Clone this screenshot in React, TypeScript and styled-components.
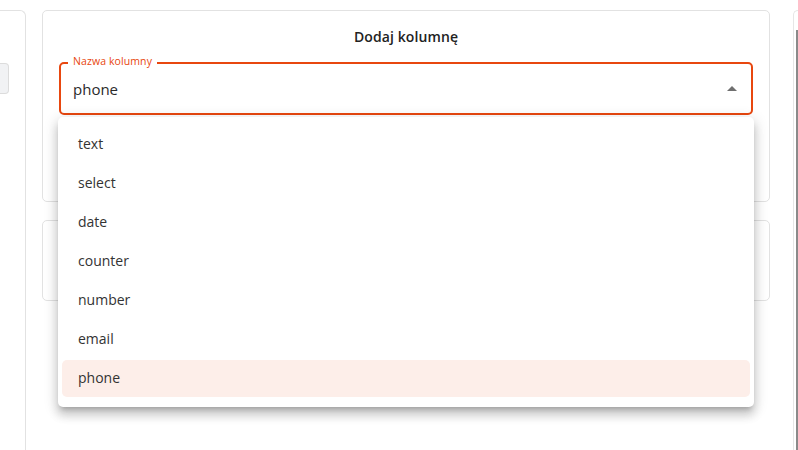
import React from "react";
import styled, { createGlobalStyle } from "styled-components";

const GlobalStyle = createGlobalStyle`
  html, body {
    margin: 0;
    padding: 0;
    background: #ffffff;
    font-family: "Open Sans", "Noto Sans", sans-serif;
    color: #333333;
    overflow: hidden;
  }
  * { box-sizing: border-box; }
`;

const Page = styled.div`
  display: flex;
  align-items: stretch;
  width: 798px;
  height: 450px;
  overflow: hidden;
`;

const LeftPanel = styled.div`
  width: 26px;
  flex: none;
  margin-top: 10px;
  border-top: 1px solid #e2e2e2;
  border-right: 1px solid #e2e2e2;
  border-top-right-radius: 6px;
  padding-top: 52px;
`;

const EdgeButton = styled.div`
  width: 9px;
  height: 31px;
  background: #f1f2f4;
  border: 1px solid #dcdcdc;
  border-left: none;
  border-radius: 0 4px 4px 0;
`;

const Main = styled.div`
  width: 728px;
  flex: none;
  margin-left: 16px;
  padding-top: 10px;
  display: flex;
  flex-direction: column;
  gap: 18px;
`;

const Card = styled.div<{ $h: number }>`
  position: relative;
  height: ${(p) => p.$h}px;
  border: 1px solid #e2e2e2;
  border-radius: 5px;
  background: #fff;
  padding: 0 16px;
`;

const Title = styled.div`
  text-align: center;
  font-size: 14px;
  font-weight: 600;
  color: #222;
  padding-top: 16px;
  height: 47px;
  letter-spacing: 0.1px;
`;

const FieldWrap = styled.div`
  position: relative;
`;

const Field = styled.fieldset`
  margin: 0;
  height: 57px;
  border: 2px solid #e8470f;
  border-radius: 5px;
  padding: 0 12px 0 12px;
  display: flex;
  align-items: center;
  justify-content: space-between;
  min-width: 0;
`;

const Legend = styled.legend`
  font-size: 10.5px;
  color: #e8470f;
  padding: 0 5px;
  margin-left: -5px;
  line-height: 1;
  letter-spacing: 0.1px;
  transform: translateY(-2px);
`;

const Value = styled.span`
  font-size: 15px;
  color: #2a2a2a;
  margin-top: -3px;
`;

const Arrow = styled.span`
  width: 0;
  height: 0;
  border-left: 5px solid transparent;
  border-right: 5px solid transparent;
  border-bottom: 5px solid #6f6f6f;
  margin-right: 2px;
  margin-top: -4px;
`;

const Menu = styled.ul`
  position: absolute;
  left: -1px;
  right: -1px;
  top: 59px;
  margin: 0;
  padding: 9px 4px 10px;
  list-style: none;
  background: #fff;
  border-radius: 5px;
  box-shadow: 0px 5px 5px -3px rgba(0, 0, 0, 0.2),
    0px 8px 10px 1px rgba(0, 0, 0, 0.14), 0px 3px 14px 2px rgba(0, 0, 0, 0.12);
  display: flex;
  flex-direction: column;
  gap: 2px;
  z-index: 10;
`;

const Item = styled.li<{ $active?: boolean }>`
  height: 37px;
  display: flex;
  align-items: center;
  padding: 0 0 2px 16px;
  font-size: 14px;
  color: #333;
  border-radius: 5px;
  background: ${(p) => (p.$active ? "#fdeee9" : "transparent")};
`;

const RightPanel = styled.div`
  flex: none;
  width: 6px;
  margin-left: 23px;
  margin-top: 10px;
  border-top: 1px solid #e6e6e6;
  border-left: 1px solid #e6e6e6;
  border-top-left-radius: 5px;
  display: flex;
  justify-content: flex-end;
  padding-top: 19px;
`;

const ScrollLine = styled.div`
  width: 2px;
  background: #8a8a8a;
  margin-right: 1px;
`;

const options = ["text", "select", "date", "counter", "number", "email", "phone"];

export default function App() {
  return (
    <>
      <GlobalStyle />
      <Page>
        <LeftPanel>
          <EdgeButton />
        </LeftPanel>
        <Main>
          <Card $h={192}>
            <Title>Dodaj kolumnę</Title>
            <FieldWrap>
              <Field>
                <Legend>Nazwa kolumny</Legend>
                <Value>phone</Value>
                <Arrow />
              </Field>
              <Menu>
                {options.map((o) => (
                  <Item key={o} $active={o === "phone"}>
                    {o}
                  </Item>
                ))}
              </Menu>
            </FieldWrap>
          </Card>
          <Card $h={81} />
        </Main>
        <RightPanel>
          <ScrollLine />
        </RightPanel>
      </Page>
    </>
  );
}
